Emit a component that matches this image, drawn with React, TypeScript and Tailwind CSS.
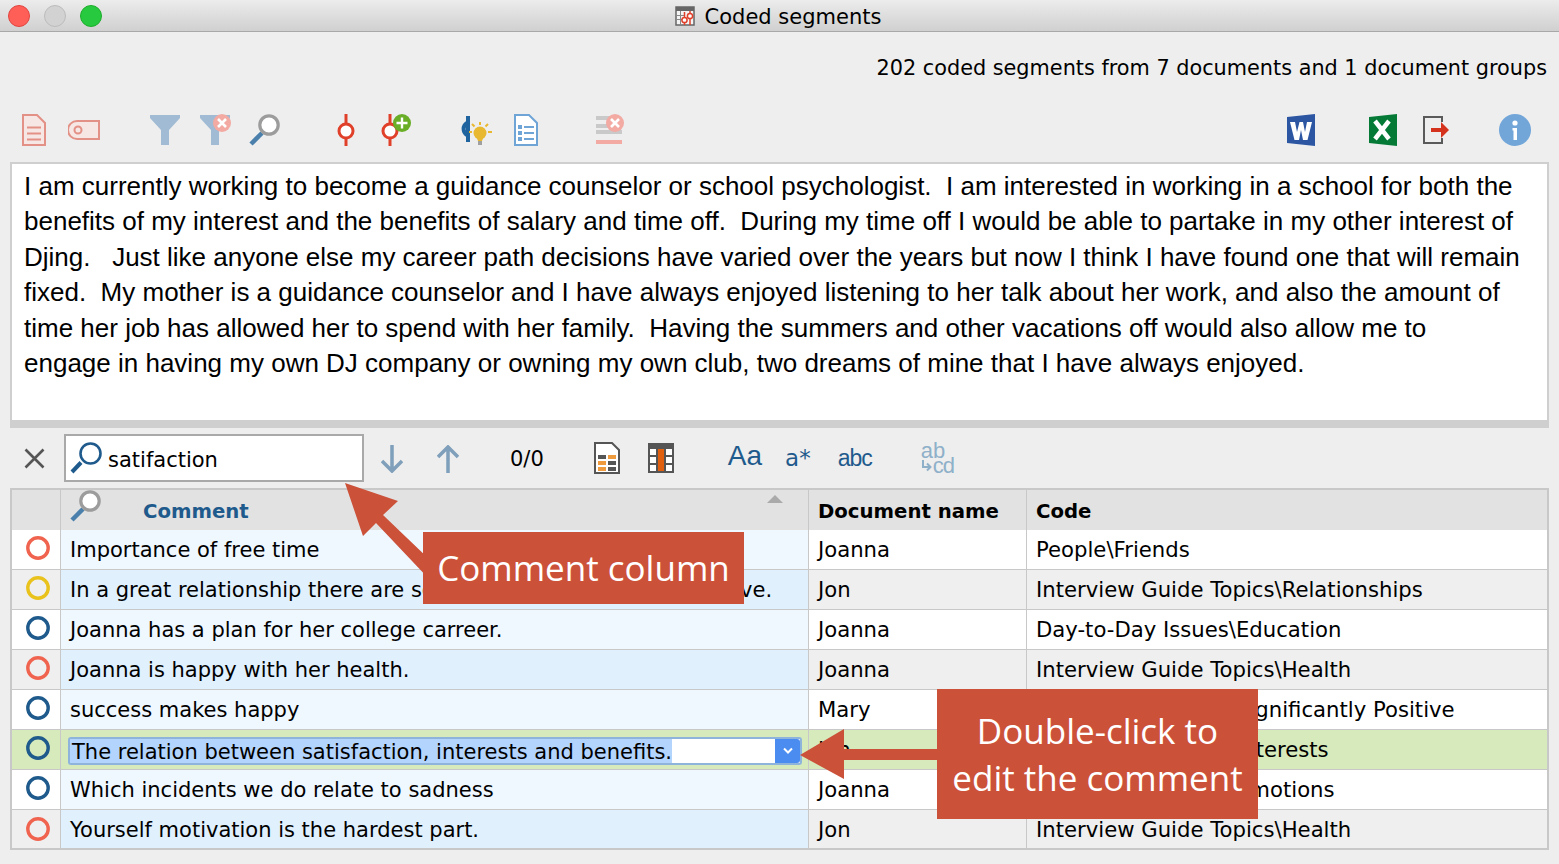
import React from 'react';

interface Row {
    color: 'red' | 'yellow' | 'blue';
    comment: string;
    doc: string;
    code: string;
    selected?: boolean;
}

const rows: Row[] = [
    { color: 'red', comment: 'Importance of free time', doc: 'Joanna', code: 'People\\Friends' },
    { color: 'yellow', comment: 'In a great relationship there are so many things you give and love.', doc: 'Jon', code: 'Interview Guide Topics\\Relationships' },
    { color: 'blue', comment: 'Joanna has a plan for her college carreer.', doc: 'Joanna', code: 'Day-to-Day Issues\\Education' },
    { color: 'red', comment: 'Joanna is happy with her health.', doc: 'Joanna', code: 'Interview Guide Topics\\Health' },
    { color: 'blue', comment: 'success makes happy', doc: 'Mary', code: 'Day-to-Day Issues\\Significantly Positive' },
    { color: 'blue', comment: 'The relation between satisfaction, interests and benefits.', doc: 'Jon', code: 'Day-to-Day Issues\\Interests', selected: true },
    { color: 'blue', comment: 'Which incidents we do relate to sadness', doc: 'Joanna', code: 'Day-to-Day Issues\\Emotions' },
    { color: 'red', comment: 'Yourself motivation is the hardest part.', doc: 'Jon', code: 'Interview Guide Topics\\Health' },
];

const textLines = [
    'I am currently working to become a guidance counselor or school psychologist.  I am interested in working in a school for both the',
    'benefits of my interest and the benefits of salary and time off.  During my time off I would be able to partake in my other interest of',
    'Djing.   Just like anyone else my career path decisions have varied over the years but now I think I have found one that will remain',
    'fixed.  My mother is a guidance counselor and I have always enjoyed listening to her talk about her work, and also the amount of',
    'time her job has allowed her to spend with her family.  Having the summers and other vacations off would also allow me to',
    'engage in having my own DJ company or owning my own club, two dreams of mine that I have always enjoyed.',
];

const markerColor = { red: '#f0644f', yellow: '#e9c21c', blue: '#1f5a8c' };

const XBadge = ({ cx, cy }: { cx: number; cy: number }) => (
    <g>
        <circle cx={cx} cy={cy} r="9" fill="#f2aaa3" />
        <path d={`M${cx - 4} ${cy - 4}L${cx + 4} ${cy + 4}M${cx + 4} ${cy - 4}L${cx - 4} ${cy + 4}`} stroke="#fff" strokeWidth="2.6" />
    </g>
);

const DocIcon = () => (
    <svg width="24" height="32" viewBox="0 0 24 32">
        <path d="M1 1H15L23 9V31H1Z" fill="#f6e6e4" stroke="#e39186" strokeWidth="2" />
        <path d="M5 13.5H19M5 19.5H19M5 25.5H19" stroke="#e39186" strokeWidth="2" />
    </svg>
);

const TagIcon = () => (
    <svg width="32" height="20" viewBox="0 0 32 20">
        <path d="M9 1H31V19H9A9 9 0 0 1 9 1Z" fill="#f6e6e4" stroke="#e39186" strokeWidth="2" />
        <circle cx="10" cy="10" r="3.5" fill="none" stroke="#e39186" strokeWidth="2" />
    </svg>
);

const FilterIcon = () => (
    <svg width="30" height="30" viewBox="0 0 30 30">
        <path d="M0 0H30V3L19 15V30H11V15L0 3Z" fill="#a0bbd3" />
    </svg>
);

const FilterOffIcon = () => (
    <svg width="32" height="32" viewBox="0 0 32 32">
        <path d="M0 1H30V4L19 16V31H11V16L0 4Z" fill="#a0bbd3" />
        <XBadge cx={22} cy={9} />
    </svg>
);

const MagIcon = () => (
    <svg width="32" height="32" viewBox="0 0 32 32">
        <path d="M2 30L13 19" stroke="#4a80ab" strokeWidth="4.5" />
        <circle cx="20" cy="11" r="9.2" fill="#fff" stroke="#9c9c9c" strokeWidth="3.2" />
    </svg>
);

const CodeIcon = () => (
    <svg width="18" height="32" viewBox="0 0 18 32">
        <path d="M9 0V32" stroke="#e0402a" strokeWidth="3" />
        <circle cx="9" cy="17" r="7" fill="#fff" stroke="#e0402a" strokeWidth="3" />
    </svg>
);

const CodeAddIcon = () => (
    <svg width="30" height="32" viewBox="0 0 30 32">
        <path d="M9 0V32" stroke="#e0402a" strokeWidth="3" />
        <circle cx="9" cy="17" r="7" fill="#fff" stroke="#e0402a" strokeWidth="3" />
        <circle cx="21" cy="9" r="9" fill="#6aae28" />
        <path d="M21 3.5V14.5M15.5 9H26.5" stroke="#fff" strokeWidth="2.4" />
    </svg>
);

const CodeBulbIcon = () => (
    <svg width="33" height="32" viewBox="0 0 33 32">
        <path d="M8 2V28" stroke="#1f639f" strokeWidth="4" />
        <path d="M7 9A7 7 0 0 0 7 21" fill="none" stroke="#1f639f" strokeWidth="4" />
        <circle cx="20" cy="19" r="6.5" fill="#e8b830" />
        <path d="M16 22H24L22 27H18Z" fill="#e8b830" />
        <path d="M18 27H22V31H18Z" fill="#a0a0a0" />
        <path d="M20 8V11M12 10L14.500 12.500M28 10L25.500 12.500M9 18H12M28 18H32" stroke="#e8b830" strokeWidth="2" />
    </svg>
);

const DocListIcon = () => (
    <svg width="24" height="32" viewBox="0 0 24 32">
        <path d="M1 1H15L23 9V31H1Z" fill="#fff" stroke="#6ea4d6" strokeWidth="2" />
        <path d="M4 11H8V15H4ZM4 17H8V21H4ZM4 23H8V27H4Z" fill="#6ea4d6" />
        <path d="M10 13H20M10 19H20M10 25H20" stroke="#6ea4d6" strokeWidth="2" />
    </svg>
);

const ListOffIcon = () => (
    <svg width="30" height="32" viewBox="0 0 30 32">
        <path d="M1 2H16V6H1ZM1 10H16V14H1ZM1 20H27V16H1Z" fill="#c9c9c9" />
        <path d="M1 26H27V30H1Z" fill="#f2aaa3" />
        <XBadge cx={20} cy={9} />
    </svg>
);

const WordIcon = () => (
    <svg width="28" height="32" viewBox="0 0 28 32">
        <path d="M0 3L28 0V32L0 29Z" fill="#2c56a2" />
        <path d="M3 8H8L10 18L12.500 8H16L18 18L20 8H25L20.500 26H16L14 16L12 26H7.500Z" fill="#fff" />
    </svg>
);

const ExcelIcon = () => (
    <svg width="28" height="32" viewBox="0 0 28 32">
        <path d="M0 3L28 0V32L0 29Z" fill="#047a36" />
        <path d="M6 7L20 25M20 7L6 25" fill="none" stroke="#fff" strokeWidth="4.500" />
    </svg>
);

const ExportIcon = () => (
    <svg width="26" height="28" viewBox="0 0 26 28">
        <path d="M19 6V1H1V27H19V22" fill="none" stroke="#5a5a5a" strokeWidth="2" />
        <path d="M8 12H18V6L26 14L18 22V16H8Z" fill="#d4321c" />
    </svg>
);

const InfoIcon = () => (
    <svg width="32" height="32" viewBox="0 0 32 32">
        <circle cx="16" cy="16" r="16" fill="#72a6d9" />
        <circle cx="16" cy="9" r="2.6" fill="#fff" />
        <path d="M13.500 14H18V26H14.500V16.500H13.500Z" fill="#fff" />
    </svg>
);

const TitleIcon = () => (
    <svg width="20" height="20" viewBox="0 0 20 20">
        <path d="M1 1H19V19H1Z" fill="#f4f4f4" stroke="#666" strokeWidth="1.500" />
        <path d="M1 1H19V5H1Z" fill="#666" />
        <path d="M1 9.500H10M1 13.500H8M5.500 5V19" stroke="#888" strokeWidth="1" />
        <path d="M9.500 6V19M15 5V19" stroke="#e0402a" strokeWidth="1.500" />
        <circle cx="9.500" cy="14" r="2.600" fill="#fff" stroke="#e0402a" strokeWidth="1.500" />
        <circle cx="15" cy="10" r="2.600" fill="#fff" stroke="#e0402a" strokeWidth="1.500" />
    </svg>
);

const SearchGlass = () => (
    <svg width="32" height="32" viewBox="0 0 32 32">
        <path d="M2 30L11 20.500" stroke="#1f5a8c" strokeWidth="4" />
        <circle cx="20.500" cy="11.500" r="10" fill="#fff" stroke="#1f5a8c" strokeWidth="2.600" />
    </svg>
);

const ArrowDown = () => (
    <svg width="22" height="28" viewBox="0 0 22 28">
        <path d="M11 0V26M1 16L11 26L21 16" fill="none" stroke="#7f9fbb" strokeWidth="3.500" />
    </svg>
);

const ArrowUp = () => (
    <svg width="22" height="28" viewBox="0 0 22 28">
        <path d="M11 28V2M1 12L11 2L21 12" fill="none" stroke="#7f9fbb" strokeWidth="3.500" />
    </svg>
);

const SheetIcon = () => (
    <svg width="26" height="32" viewBox="0 0 26 32">
        <path d="M1 1H18L25 8V31H1Z" fill="#fff" stroke="#555" strokeWidth="2" />
        <path d="M4 13H12V17H4ZM14 19H22V23H14ZM14 25H22V29H14Z" fill="#555" />
        <path d="M14 13H22V17H14ZM4 19H12V23H4ZM4 25H12V29H4Z" fill="#f09a3e" />
    </svg>
);

const ColumnIcon = () => (
    <svg width="26" height="30" viewBox="0 0 26 30">
        <path d="M0 0H26V30H0Z" fill="#555" />
        <path d="M2 6H8V12H2ZM18 6H24V12H18ZM2 14H8V20H2ZM18 14H24V20H18ZM2 22H8V28H2ZM18 22H24V28H18Z" fill="#fff" />
        <path d="M10 6H16V28H10Z" fill="#e06010" />
    </svg>
);

const Marker = ({ color }: { color: Row['color'] }) => (
    <svg width="24" height="24" viewBox="0 0 24 24">
        <circle cx="12" cy="12" r="10.2" fill="none" stroke={markerColor[color]} strokeWidth="3.400" />
    </svg>
);

const CommentEditor = ({ text }: { text: string }) => (
    <div className="ml-[7px] mt-[7px] flex h-[28px] w-[734px] rounded-[3px] border-2 border-[#8fb4dc] bg-white">
        <div className="flex min-w-0 flex-1 items-center">
            <span className="bg-[#b3d4fd] pl-[2px] pt-[2px] leading-[22px] whitespace-pre">{text}</span>
        </div>
        <div className="flex w-[25px] items-center justify-center rounded-r-[3px] bg-[#4a8cf0]">
            <svg width="12" height="8" viewBox="0 0 12 8">
                <path d="M2 1.500L6 5.500L10 1.500" fill="none" stroke="#fff" strokeWidth="2" />
            </svg>
        </div>
    </div>
);

const TableRow = ({ row, index }: { row: Row; index: number }) => {
    const even = index % 2 === 1;
    const last = index === rows.length - 1;
    const plain = row.selected ? 'bg-[#d6eabb]' : even ? 'bg-[#efefef]' : 'bg-white';
    const tint = row.selected ? 'bg-[#d6eabb]' : even ? 'bg-[#e0f0fd]' : 'bg-[#eff7ff]';
    const height = last ? 'h-[38px]' : 'h-10 border-b border-[#c8c8c8]';
    const textPad = last ? 'pt-[4px]' : 'pt-[2px]';
    const cellPad = last ? 'pt-[2px]' : '';
    const markerPad = last ? 'pl-[3px]' : 'pl-[3px] pb-[3px]';

    return (
        <div className={`grid grid-cols-[49px_748px_218px_1fr] ${height}`}>
            <div className={`flex items-center justify-center border-r border-[#c8c8c8] ${markerPad} ${plain}`}>
                <Marker color={row.color} />
            </div>
            <div className={`overflow-hidden border-r border-[#c8c8c8] ${tint}`}>
                {row.selected ? (
                    <CommentEditor text={row.comment} />
                ) : (
                    <div className={`flex h-full items-center whitespace-pre pl-[9px] ${textPad}`}>{row.comment}</div>
                )}
            </div>
            <div className={`flex items-center border-r border-[#c8c8c8] pl-[9px] text-[21.2px] ${cellPad} ${plain}`}>{row.doc}</div>
            <div className={`flex items-center pl-[9px] text-[21.2px] ${cellPad} ${plain}`}>{row.code}</div>
        </div>
    );
};

const App = () => {
    return (
        <div className="relative h-[864px] w-[1559px] overflow-hidden bg-[#eeeeee] font-['DejaVu_Sans',sans-serif] text-[21px] text-black">
            <div className="relative flex h-8 items-center justify-center border-b border-[#a8a8a8] bg-gradient-to-b from-[#ececec] to-[#d0d0d0]">
                <div className="absolute left-[8px] top-[5px] flex gap-[14px]">
                    <span className="h-[22px] w-[22px] rounded-full border border-[#e0443e] bg-[#ff5f57]" />
                    <span className="h-[22px] w-[22px] rounded-full border border-[#bcbcbc] bg-[#d2d2d2]" />
                    <span className="h-[22px] w-[22px] rounded-full border border-[#1dad2b] bg-[#27c93f]" />
                </div>
                <div className="flex items-center gap-[10px] pr-[3px]">
                    <TitleIcon />
                    <span className="pt-[4px]">Coded segments</span>
                </div>
            </div>

            <div className="flex h-[66px] items-center justify-end pr-[12px] pt-[7px] text-[20.8px]">
                202 coded segments from 7 documents and 1 document groups
            </div>

            <div className="flex h-[64px] items-center pl-[22px] pr-[28px]">
                <DocIcon />
                <div className="ml-[22px]"><TagIcon /></div>
                <div className="ml-[50px]"><FilterIcon /></div>
                <div className="ml-[20px]"><FilterOffIcon /></div>
                <div className="ml-[17px]"><MagIcon /></div>
                <div className="ml-[56px]"><CodeIcon /></div>
                <div className="ml-[26px]"><CodeAddIcon /></div>
                <div className="ml-[49px]"><CodeBulbIcon /></div>
                <div className="ml-[21px]"><DocListIcon /></div>
                <div className="ml-[57px]"><ListOffIcon /></div>
                <div className="ml-auto"><WordIcon /></div>
                <div className="ml-[54px]"><ExcelIcon /></div>
                <div className="ml-[26px]"><ExportIcon /></div>
                <div className="ml-[50px]"><InfoIcon /></div>
            </div>

            <div className="mx-[10px] h-[266px] border-x-[2px] border-t-[2px] border-b-[8px] border-[#cfcfcf] bg-white pl-[12px] pt-[5px] font-['Liberation_Sans',sans-serif] text-[26px] leading-[35.4px]">
                {textLines.map(line => (
                    <div key={line} className="whitespace-pre">{line}</div>
                ))}
            </div>

            <div className="flex h-[60px] items-center pl-[24px]">
                <svg width="21" height="21" viewBox="0 0 21 21">
                    <path d="M1.500 1.500L19.500 19.500M19.500 1.500L1.500 19.500" stroke="#555" strokeWidth="2.600" />
                </svg>
                <div className="ml-[19px] flex h-[48px] w-[300px] items-center border-2 border-[#a9a9a9] bg-white pl-[4px]">
                    <SearchGlass />
                    <span className="ml-[6px] pt-[5px]">satifaction</span>
                </div>
                <div className="ml-[17px] mt-[2px]"><ArrowDown /></div>
                <div className="ml-[34px] mt-[2px]"><ArrowUp /></div>
                <span className="ml-[51px] pt-[4px]">0/0</span>
                <div className="ml-[50px]"><SheetIcon /></div>
                <div className="ml-[28px]"><ColumnIcon /></div>
                <span className="mb-[4px] ml-[54px] font-['Liberation_Sans',sans-serif] text-[28px] leading-none text-[#1f5a8c]">Aa</span>
                <span className="ml-[23px] text-[23px] leading-none text-[#1f5a8c]">a*</span>
                <span className="ml-[27px] font-['Liberation_Sans',sans-serif] text-[23px] leading-none tracking-[-1px] text-[#1f5a8c]">abc</span>
                <div className="ml-[49px] flex flex-col font-['Liberation_Sans',sans-serif] text-[22px] leading-[15px] text-[#8fb0c9]">
                    <span>ab</span>
                    <span className="flex items-center">
                        <svg width="11" height="12" viewBox="0 0 11 12">
                            <path d="M2 0V7H9M6 3.500L9.500 7L6 10.500" fill="none" stroke="#8fb0c9" strokeWidth="2" />
                        </svg>
                        <span className="ml-[1px] tracking-[-1px]">cd</span>
                    </span>
                </div>
            </div>

            <div className="mx-[10px] border-2 border-[#c8c8c8]">
                <div className="grid h-10 grid-cols-[49px_748px_218px_1fr] bg-[#e2e2e2] text-[19.7px] font-bold">
                    <div className="border-r border-[#c8c8c8]" />
                    <div className="relative flex items-center border-r border-[#c8c8c8] pl-[82px] pt-[3px] text-[#1f5a8c]">
                        <div className="absolute left-[9px] top-[0px]"><MagIcon /></div>
                        Comment
                        <span className="absolute right-[25px] top-[5px] h-0 w-0 border-x-[8px] border-b-[8px] border-x-transparent border-b-[#aaaaaa]" />
                    </div>
                    <div className="flex items-center border-r border-[#c8c8c8] pl-[9px] pt-[3px]">Document name</div>
                    <div className="flex items-center pl-[9px] pt-[3px]">Code</div>
                </div>
                {rows.map((row, index) => (
                    <TableRow key={row.comment} row={row} index={index} />
                ))}
            </div>

            <svg className="absolute left-0 top-0" width="1559" height="864" viewBox="0 0 1559 864">
                <path d="M345 483L398 501L383 515L430 560V580L376 523L363 536Z" fill="#cc5139" />
                <path d="M800 755L844 729V749H940V760H844V779Z" fill="#cc5139" />
            </svg>

            <div className="absolute left-[423px] top-[532px] flex h-[72px] w-[321px] items-center justify-center bg-[#cc5139] font-['Open_Sans',sans-serif] text-[35px] text-white">
                Comment column
            </div>
            <div className="absolute left-[937px] top-[689px] flex h-[130px] w-[321px] flex-col items-center justify-center bg-[#cc5139] font-['Open_Sans',sans-serif] text-[35px] leading-[47px] text-white">
                <span>Double-click to</span>
                <span>edit the comment</span>
            </div>
        </div>
    );
};

export default App;
